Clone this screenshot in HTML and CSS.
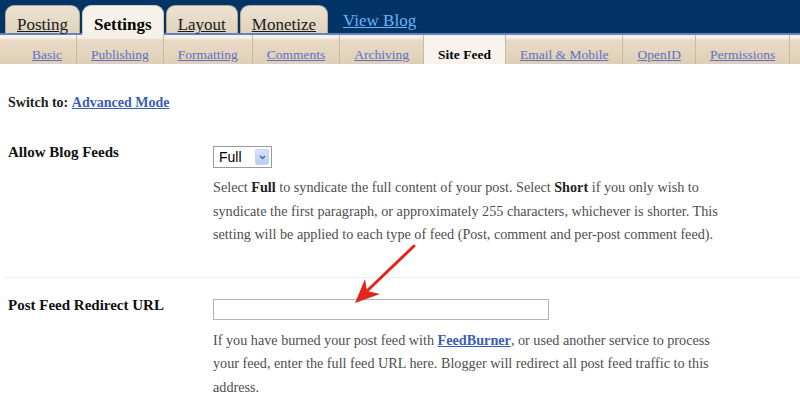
FILE: index.html
```html
<!DOCTYPE html>
<html>
<head>
<meta charset="utf-8">
<link rel="stylesheet" href="styles.css">
</head>
<body>
<div class="topbar">
  <a class="tab" href="#">Posting</a>
  <a class="tab active" href="#">Settings</a>
  <a class="tab" href="#">Layout</a>
  <a class="tab" href="#">Monetize</a>
  <a class="viewblog" href="#">View Blog</a>
</div>
<div class="subbar">
  <a class="sub" href="#">Basic</a>
  <a class="sub" href="#">Publishing</a>
  <a class="sub" href="#">Formatting</a>
  <a class="sub" href="#">Comments</a>
  <a class="sub" href="#">Archiving</a>
  <span class="sub current">Site Feed</span>
  <a class="sub" href="#">Email &amp; Mobile</a>
  <a class="sub" href="#">OpenID</a>
  <a class="sub" href="#">Permissions</a>
</div>
<main class="content">
  <p class="switch"><b>Switch to:</b> <a href="#">Advanced Mode</a></p>
  <div class="row first">
    <div class="label">Allow Blog Feeds</div>
    <div class="field">
      <div class="select"><span class="sel-text">Full</span><span class="sel-btn"><svg width="7" height="5" viewBox="0 0 7 5"><path d="M1 1 L3.5 3.5 L6 1" fill="none" stroke="#4d6185" stroke-width="1.3"/></svg></span></div>
      <p class="desc">Select <b>Full</b> to syndicate the full content of your post. Select <b>Short</b> if you only wish to syndicate the first paragraph, or approximately 255 characters, whichever is shorter. This setting will be applied to each type of feed (Post, comment and per-post comment feed).</p>
    </div>
  </div>
  <div class="row second">
    <div class="label">Post Feed Redirect URL</div>
    <div class="field">
      <input class="url" type="text">
      <p class="desc">If you have burned your post feed with <a href="#">FeedBurner</a>, or used another service to process your feed, enter the full feed URL here. Blogger will redirect all post feed traffic to this address.</p>
    </div>
  </div>
</main>
<svg class="arrow" width="800" height="399" viewBox="0 0 800 399">
  <line x1="414" y1="246" x2="368" y2="290" stroke="#e1261c" stroke-width="3" stroke-linecap="round"/>
  <polygon points="355,303 365,279 367,291 380,294" fill="#e1261c"/>
</svg>
</body>
</html>
```
FILE: styles.css
```css
* { box-sizing: border-box; }
html, body { margin: 0; padding: 0; background: #fff; }
body {
  font-family: "Liberation Serif", "Times New Roman", serif;
  color: #111;
  width: 800px;
  height: 399px;
  overflow: hidden;
  position: relative;
}
.topbar {
  height: 35px;
  background: #023468;
  border-bottom: 2px solid #5c86bf;
  display: flex;
  align-items: flex-end;
  padding-left: 5px;
  gap: 2px;
}
.tab {
  display: block;
  height: 28px;
  padding: 9px 11px 0;
  font-size: 17px;
  line-height: 19px;
  color: #1a1a1a;
  text-decoration: underline;
  background: linear-gradient(#ece2d2, #e0d3bd);
  border: 1px solid #b9a88c;
  border-bottom: none;
  border-radius: 9px 9px 0 0;
  white-space: nowrap;
}
.tab.active {
  height: 30px;
  margin-bottom: -2px;
  padding-top: 9px;
  background: #f6f1e9;
  font-weight: bold;
  text-decoration: none;
  color: #000;
  border-color: #d8cbb4;
}
.viewblog {
  margin-left: 13px;
  font-size: 17px;
  line-height: 20px;
  padding-bottom: 2px;
  color: #6fb3f4;
  text-decoration: underline;
}
.subbar {
  height: 29px;
  display: flex;
  padding-left: 18px;
  background: linear-gradient(#f6f0e6 0, #f6f0e6 3px, #e7dac6 5px, #dfcfb6 100%);
}
.sub {
  display: block;
  height: 29px;
  padding: 10px 14px 0;
  font-size: 13.5px;
  line-height: 19px;
  color: #5f70c6;
  text-decoration: underline;
  border-right: 1px solid #cab9a0;
  white-space: nowrap;
}
.sub.current {
  background: #f7f3ec;
  color: #000;
  font-weight: bold;
  text-decoration: none;
  padding: 10px 14px 0;
}
.content {
  padding: 0 0 0 8px;
}
.switch {
  margin: 29px 0 0;
  font-size: 14px;
  line-height: 20px;
  color: #222;
}
.switch a, .desc a {
  color: #3a5db3;
  font-weight: bold;
  text-decoration: underline;
}
.row {
  display: grid;
  grid-template-columns: 205px 1fr;
}
.row.first {
  margin-top: 29px;
  padding-bottom: 30px;
  border-bottom: 1px solid #ededed;
  margin-left: -3px;
  padding-left: 3px;
}
.row.second {
  padding-top: 17px;
}
.label {
  font-size: 15px;
  line-height: 20px;
  font-weight: bold;
  color: #111;
}
.row.first .field { padding-top: 4px; }
.row.second .field { padding-top: 4px; }
.select {
  width: 59px;
  height: 22px;
  border: 1px solid #9a9a9a;
  display: flex;
  align-items: center;
  justify-content: space-between;
  padding: 0 2px 0 5px;
  background: #fff;
}
.sel-text {
  font-family: "Liberation Sans", Arial, sans-serif;
  font-size: 14px;
  color: #000;
}
.sel-btn {
  width: 14px;
  height: 16px;
  background: linear-gradient(#d4e1fb, #b9ccf3);
  border: 1px solid #c7d5f2;
  border-radius: 2px;
  display: flex;
  align-items: center;
  justify-content: center;
}
.url {
  display: block;
  width: 336px;
  height: 21px;
  margin: 0;
  border: 1px solid #b4b4b4;
  background: #fff;
  padding: 0;
}
.desc {
  margin: 8px 0 0;
  width: 518px;
  font-size: 14.2px;
  line-height: 23.5px;
  color: #4e4e4e;
}
.desc b { color: #222; }
.row.second .desc { margin-top: 9px; }
.arrow {
  position: absolute;
  left: 0;
  top: 0;
  pointer-events: none;
}
```
